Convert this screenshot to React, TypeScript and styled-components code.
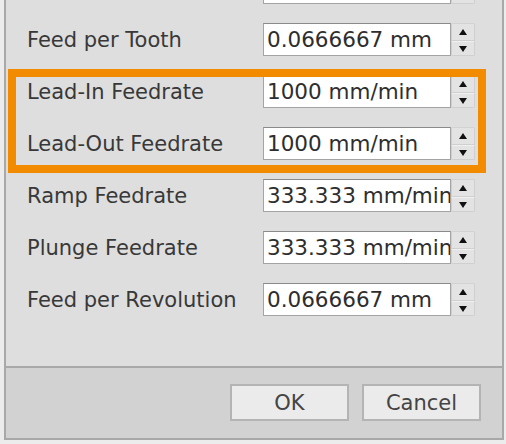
import React from "react";
import styled, { createGlobalStyle } from "styled-components";

const GlobalStyle = createGlobalStyle`
  html, body {
    margin: 0;
    padding: 0;
    background: #ececec;
    overflow: hidden;
  }
  body {
    font-family: "DejaVu Sans", "Liberation Sans", sans-serif;
  }
`;

interface IField {
  label: string;
  value: string;
}

const topFields: IField[] = [
  { label: "Cutting Feedrate", value: "1000 mm/min" },
  { label: "Feed per Tooth", value: "0.0666667 mm" },
];

const leadFields: IField[] = [
  { label: "Lead-In Feedrate", value: "1000 mm/min" },
  { label: "Lead-Out Feedrate", value: "1000 mm/min" },
];

const bottomFields: IField[] = [
  { label: "Ramp Feedrate", value: "333.333 mm/min" },
  { label: "Plunge Feedrate", value: "333.333 mm/min" },
  { label: "Feed per Revolution", value: "0.0666667 mm" },
];

function FieldRow({ label, value }: IField) {
  return (
    <Row>
      <Label>{label}</Label>
      <TextField>{value}</TextField>
      <Spinner>
        <SpinButton $up>
          <Arrow $up />
        </SpinButton>
        <SpinButton>
          <Arrow />
        </SpinButton>
      </Spinner>
    </Row>
  );
}

export default function App() {
  return (
    <>
      <GlobalStyle />
      <Panel>
        <Form>
          {topFields.map((f) => (
            <FieldRow key={f.label} {...f} />
          ))}
          <Highlight>
            {leadFields.map((f) => (
              <FieldRow key={f.label} {...f} />
            ))}
          </Highlight>
          {bottomFields.map((f) => (
            <FieldRow key={f.label} {...f} />
          ))}
        </Form>
        <Footer>
          <Button>OK</Button>
          <Button>Cancel</Button>
        </Footer>
      </Panel>
    </>
  );
}

const Panel = styled.div`
  margin: -60px 0 0 4px;
  width: 496px;
  border: 2px solid #a8a8a8;
  background: #dedede;
`;

const Form = styled.div`
  display: flex;
  flex-direction: column;
  gap: 19px;
  padding: 29px 0 50px 21px;
  border-bottom: 2px solid #a9a9a9;
`;

const Highlight = styled.div`
  position: relative;
  display: flex;
  flex-direction: column;
  gap: 19px;

  &::after {
    content: "";
    position: absolute;
    top: -6px;
    left: -19px;
    width: 462px;
    height: 88px;
    border: 8px solid #f28b00;
    pointer-events: none;
  }
`;

const Row = styled.div`
  display: flex;
  align-items: center;
  height: 33px;
`;

const Label = styled.div`
  width: 236px;
  font-size: 21px;
  color: #383838;
  white-space: nowrap;
`;

const TextField = styled.div`
  box-sizing: border-box;
  width: 188px;
  height: 33px;
  padding: 0 0 0 3px;
  background: #ffffff;
  border: 1px solid #a4a4a4;
  border-top-color: #8a8a8a;
  font-size: 21.5px;
  line-height: 31px;
  color: #2e2e2e;
  white-space: nowrap;
  overflow: hidden;
`;

const Spinner = styled.div`
  display: flex;
  flex-direction: column;
  width: 24px;
  height: 33px;
`;

const SpinButton = styled.div<{ $up?: boolean }>`
  box-sizing: border-box;
  flex: ${(p) => (p.$up ? "0 0 18px" : "1")};
  display: flex;
  align-items: ${(p) => (p.$up ? "center" : "flex-end")};
  justify-content: center;
  padding-bottom: ${(p) => (p.$up ? "0" : "3px")};
  background: #e3e3e3;
  border: 1px solid #cfcfcf;
  border-top-color: ${(p) => (p.$up ? "#d2d2d2" : "#f0f0f0")};
  border-radius: ${(p) => (p.$up ? "2px 2px 0 0" : "0 0 2px 2px")};
`;

const Arrow = styled.div<{ $up?: boolean }>`
  width: 0;
  height: 0;
  border-left: 4px solid transparent;
  border-right: 4px solid transparent;
  ${(p) =>
    p.$up ? "border-bottom: 6px solid #111111;" : "border-top: 6px solid #111111;"}
`;

const Footer = styled.div`
  display: flex;
  justify-content: flex-end;
  gap: 13px;
  height: 70px;
  box-sizing: border-box;
  padding: 16px 21px 0 0;
  background: #d2d2d2;
`;

const Button = styled.div`
  box-sizing: border-box;
  width: 119px;
  height: 37px;
  display: flex;
  align-items: center;
  justify-content: center;
  background: #ebebeb;
  border: 2px solid #b4b4b4;
  font-size: 21px;
  color: #444444;
`;
